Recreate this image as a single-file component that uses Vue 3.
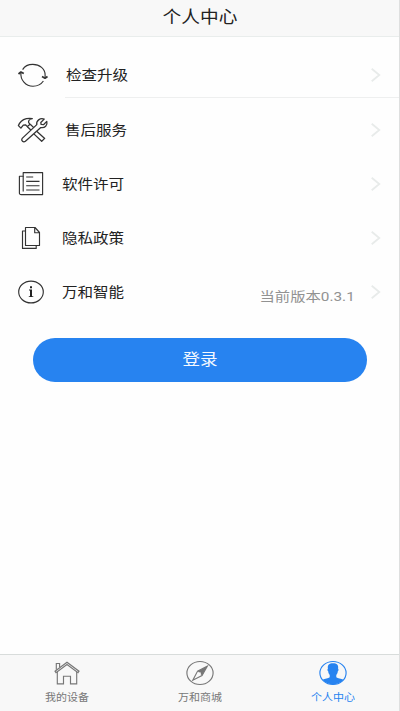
<script setup>
const rows = [
  { id: 'update', label: '检查升级' },
  { id: 'service', label: '售后服务' },
  { id: 'license', label: '软件许可' },
  { id: 'privacy', label: '隐私政策' },
  { id: 'about', label: '万和智能', note: '当前版本0.3.1' },
]
const tabs = [
  { id: 'home', label: '我的设备' },
  { id: 'shop', label: '万和商城' },
  { id: 'me', label: '个人中心', active: true },
]
</script>

<template>
  <div class="screen">
    <header class="header"><h1>个人中心</h1></header>

    <main class="content">
      <ul class="list">
        <li v-for="row in rows" :key="row.id" class="row" :class="row.id">
          <svg class="icon" width="32" height="28" viewBox="0 0 32 28">
            <g v-if="row.id === 'update'">
              <path d="M5.6 8.6C7.6 5.3 11.300 3.400 15.800 3.400c7 0 12.300 4.400 12.300 10.400V16.500" />
              <path d="M3.900 11.600C3.200 18.800 8.600 25.200 16 25.200c4.500 0 8.200-2 10.400-5.200" />
              <path d="M1.500 13 3.900 11l2.900 1.600M25 15.500l3 1.700 2.500-1.700" stroke-width="1.700" />
            </g>
            <g v-else-if="row.id === 'service'" stroke-width="1.3">
              <path d="M1.4 9.6 2.500 7.400C5 3.500 9.500 1.900 15.300 2.600c-3 .8-4.200 2-3.600 4l1.400 1.700-2.800 2.300-1.800-1.800-2.200.3-2.400 3z" />
              <path d="M10.400 10.700 13.800 14M13.200 8.200l3.600 3.400M19.700 15.300l8 7.100-3 2.900-7.600-7.200" />
              <path d="M27.200 3.100 23.800 6.500l.3 1.900 2.400.3 3.300-3.300c1 4-2 6.900-6 6.200L8.400 25.300c-2 1.500-4.800-.7-3.200-2.900L19.800 8.600c-.8-3.800 3.200-7 7.400-5.500z" />
            </g>
            <g v-else-if="row.id === 'license'">
              <path d="M6.200 2.600h19.400v22H4.200c-1.200 0-1.800-.6-1.800-1.700V6.200h3.800z" />
              <path d="M6.200 6v15.400" />
              <path d="M9.200 7h7M9.200 11.300h13.300M9.200 15.700h13.300M9.200 20h13.300" />
            </g>
            <g v-else-if="row.id === 'privacy'">
              <path d="M8.500 3.500h9.500l4.500 5v13h-14zM17.700 3.700v5h4.600" />
              <path d="M8.200 7H5.500v17.400h13.700v-2.700" />
            </g>
            <g v-else>
              <ellipse cx="14" cy="14" rx="12.300" ry="10.900" />
              <path class="solid" d="M13 8.200h2v2h-2zM12 11.600h3v6.700h1.300v.8h-4.500v-.8H13v-5.900h-1z" />
            </g>
          </svg>
          <span class="label">{{ row.label }}</span>
          <span v-if="row.note" class="note">{{ row.note }}</span>
          <svg class="chevron" width="12" height="16" viewBox="0 0 12 16">
            <path d="M1.700 1.700 9.300 8l-7.600 6.300" />
          </svg>
        </li>
      </ul>
      <button class="login"><span>登录</span></button>
    </main>

    <nav class="tabbar">
      <a v-for="tab in tabs" :key="tab.id" class="tab" :class="{ active: tab.active }">
        <svg width="30" height="26" viewBox="0 0 30 26">
          <g v-if="tab.id === 'home'">
            <path d="M3 11.200 15 2.200l12 9-1 1.400L15 4.500 4 12.600z" />
            <path d="M5.300 11.800v12h6.200v-7.600h7v7.600h6.200v-12M4.300 9.800V3.500h3.300V7" />
          </g>
          <g v-else-if="tab.id === 'shop'">
            <ellipse cx="15" cy="13" rx="13.100" ry="11.500" />
            <path d="M22.300 6.200 17 15.500 7.800 20.200l4.800-9.100z" />
            <path class="solid" d="M22.300 6.200 17 15.500l-4.400-4.400z" />
            <circle class="hole" cx="14.900" cy="13.200" r="1" />
          </g>
          <g v-else>
            <ellipse cx="15" cy="13" rx="13.100" ry="11.500" />
            <path class="solid" d="M4.500 19.800c2.600-1.200 5.700-1.500 7.200-2.500v-2.400c-1-1-1.400-2.200-1.500-3.600-.9-.6-.9-2-.3-2.600-.6-3.700 1.300-5.400 5.100-5.400s5.700 1.700 5.100 5.400c.6.600.6 2-.3 2.600-.1 1.400-.5 2.600-1.500 3.600v2.400c1.500 1 4.600 1.300 7.200 2.500-5.500 6.200-15.500 6.200-21 0z" />
          </g>
        </svg>
        <span>{{ tab.label }}</span>
      </a>
    </nav>
  </div>
</template>

<style>
body {
  margin: 0;
}
</style>

<style scoped>
.screen {
  box-sizing: border-box;
  width: 400px;
  height: 711px;
  display: flex;
  flex-direction: column;
  background: #fefefe;
  border-right: 1px solid #dedfdf;
  font-family: Roboto, "Noto Sans CJK SC", sans-serif;
  color: #222;
  overflow: hidden;
}
.header {
  box-sizing: border-box;
  height: 37px;
  padding-left: 1px;
  display: flex;
  justify-content: center;
  background: #f8f8f8;
  border-bottom: 1px solid #e9edec;
}
h1 {
  margin: 0;
  font-size: 17px;
  line-height: 34px;
  font-weight: 400;
  transform: scaleX(1.1);
}
.content {
  flex: 1;
  display: flex;
  flex-direction: column;
}
.list {
  list-style: none;
  margin: 0;
  padding: 11px 0 0;
}
.row {
  box-sizing: border-box;
  height: 54.25px;
  padding: 0 17px;
  display: flex;
  align-items: center;
}
.icon {
  fill: none;
  stroke: #333;
  stroke-width: 1.15;
  stroke-linejoin: round;
  flex: none;
}
.solid {
  fill: #222;
  stroke: none;
}
.label {
  margin-left: 13px;
  font-size: 14px;
  line-height: 20px;
  transform: scaleX(1.11);
  transform-origin: left;
}
.update {
  height: 50px;
  margin-left: 65px;
  padding-left: 0;
  border-bottom: 1px solid #eeefef;
  margin-bottom: 4.25px;
  padding-top: 4px;
}
.update .icon {
  margin-left: -48px;
}
.update .label {
  margin-left: 16.500px;
}
.service {
  padding-top: 1px;
}
.service .label {
  margin-left: 15.500px;
}
.note {
  margin: 9px 15px 0 auto;
  font-size: 13px;
  line-height: 20px;
  color: #929292;
  transform: scaleX(1.18);
  transform-origin: right;
}
.chevron {
  flex: none;
  margin-left: auto;
  fill: none;
  stroke: #e8ebea;
  stroke-width: 1.8;
}
.note + .chevron {
  margin-left: 0;
}
.login {
  width: 334px;
  height: 44px;
  margin: 19px 0 0 33px;
  padding: 0 0 4px;
  border: 0;
  border-radius: 22px;
  background: #2783f0;
  color: #f4f9ff;
  font: inherit;
  font-size: 16px;
}
.login span {
  display: inline-block;
  transform: scaleX(1.1);
}
.tabbar {
  box-sizing: border-box;
  height: 57px;
  display: flex;
  background: #f8f8f8;
  border-top: 1px solid #d8dcdb;
}
.tab {
  flex: 1;
  display: flex;
  flex-direction: column;
  align-items: center;
  padding-top: 5px;
  color: #777;
  font-size: 10px;
}
.tab svg {
  fill: none;
  stroke: currentColor;
  stroke-width: 1.15;
}
.tab .solid {
  fill: currentColor;
}
.tab .hole {
  fill: #f8f8f8;
  stroke: none;
}
.tab span {
  line-height: 14px;
  margin-top: 5px;
  transform: scaleX(1.1);
}
.tab.active {
  color: #2783f0;
}
</style>
